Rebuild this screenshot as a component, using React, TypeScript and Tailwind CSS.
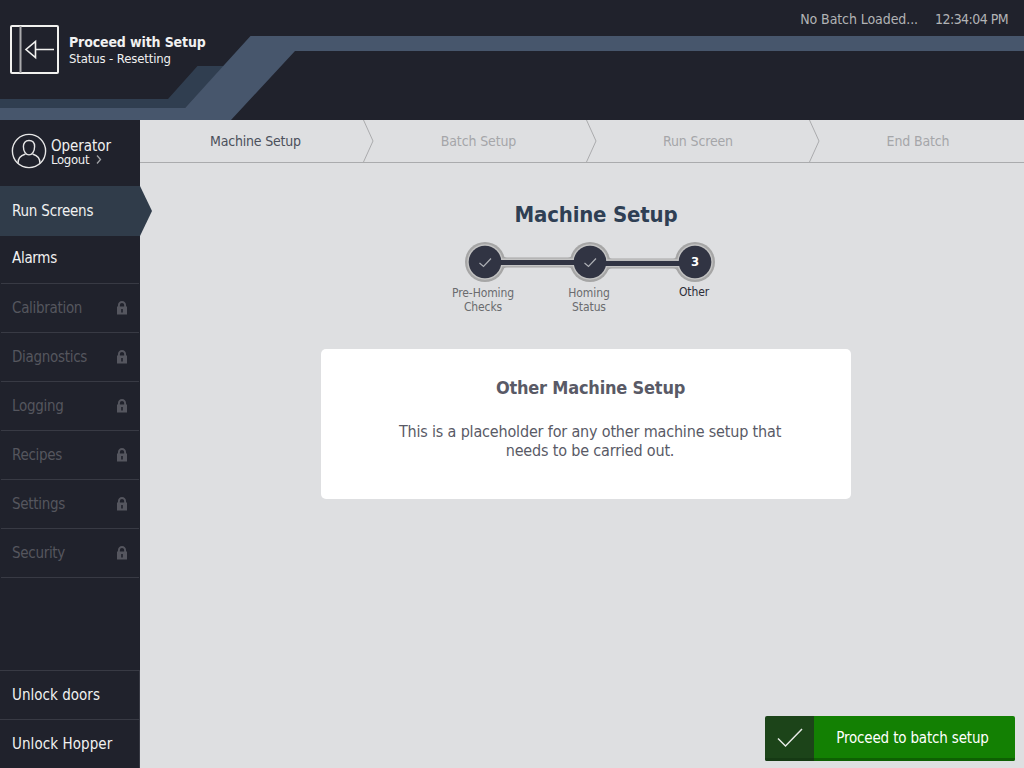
import React from "react";

const locked = ["Calibration", "Diagnostics", "Logging", "Recipes", "Settings", "Security"];

function Lock() {
  return (
    <svg width="10" height="14" viewBox="0 0 10 14" className="mr-[12px] shrink-0">
      <path d="M1.900 6.500V4.300a3.100 3.300 0 0 1 6.200 0v2.200" fill="none" stroke="#55565f" strokeWidth="1.900" />
      <path fillRule="evenodd" fill="#55565f" d="M0 5.500h10V13.500H0zM4.200 8v3.500h1.600V8z" />
    </svg>
  );
}

function Header() {
  return (
    <header className="relative h-[120px] shrink-0 bg-[#20222c]">
      <svg className="absolute inset-0" width="1024" height="120" viewBox="0 0 1024 120">
        <path d="M0 99H168L197.500 66H224L185 108H0Z" fill="#303e50" />
        <path d="M0 108H185L250.500 36H1024V51H295L231 120H0Z" fill="#47566c" />
      </svg>
      <div className="relative flex justify-between">
        <div className="flex pl-[10px] pt-[25px]">
          <svg width="49" height="49" viewBox="0 0 49 49" fill="none" stroke="#f1f1ef">
            <rect x="1" y="1" width="47" height="47" rx="1" strokeWidth="2" />
            <path d="M10.500 1V48" strokeWidth="2" stroke="#aaaaad" />
            <path d="M44 24.500H26M25.500 16.500V32.500L16 24.500Z" strokeWidth="1.600" />
          </svg>
          <div className="flex flex-col pl-[10px] pt-[8px] text-[#f1f1f1]">
            <span className="text-[14px] leading-[18px] font-bold tracking-[-0.13px]">Proceed with Setup</span>
            <span className="text-[13px] leading-[16px] tracking-[-0.13px]">Status - Resetting</span>
          </div>
        </div>
        <div className="flex gap-[17px] pr-[16px] pt-[10px] text-[14px] leading-[18px] text-[#b2b3b5]">
          <span className="tracking-[-0.08px]">No Batch Loaded...</span>
          <span className="tracking-[-0.55px]">12:34:04 PM</span>
        </div>
      </div>
    </header>
  );
}

function Sidebar() {
  return (
    <nav className="flex w-[140px] shrink-0 flex-col bg-[#20222c] text-[15px] leading-[18px] tracking-[-0.3px] text-[#f1f1f1]">
      <div className="flex h-[66px] shrink-0 pl-[11px] pt-[13px]">
        <svg width="36" height="36" viewBox="0 0 36 36" fill="none" stroke="#e6e6e6" strokeWidth="1.4">
          <circle cx="18" cy="18" r="16.600" />
          <path d="M18 7.500c-3.700 0-5.600 2.600-5.600 6 0 4.500 2.200 8.400 5.600 8.400s5.600-3.900 5.600-8.400c0-3.400-1.900-6-5.600-6Z" />
          <path d="M7 30.500c0-5.500 2-7.500 7.500-9.500M29 30.500c0-5.500-2-7.500-7.500-9.500" />
        </svg>
        <div className="flex flex-col pl-[4px] pt-[6px]">
          <span className="leading-[14px] tracking-[-0.05px]">Operator</span>
          <span className="flex items-center text-[13px] leading-[13px]">
            Logout
            <svg width="6" height="9" viewBox="0 0 6 9" className="ml-[7px]" fill="none" stroke="#a0a1a5" strokeWidth="1.300">
              <path d="M1 .5 4.500 4.500 1 8.500" />
            </svg>
          </span>
        </div>
      </div>
      <div className="relative flex h-[50px] shrink-0 items-center bg-[#303c4a] pl-[12px] tracking-[-0.2px]">
        Run Screens
        <svg className="absolute left-full top-0" width="12" height="50" viewBox="0 0 12 50">
          <path d="M0 0 12 25 0 50Z" fill="#303c4a" />
        </svg>
      </div>
      <div className="mx-px flex h-[48px] shrink-0 items-center border-b border-[#383a44] pb-[3px] pl-[11px]">Alarms</div>
      {locked.map((name) => (
        <div key={name} className="mx-px flex h-[49px] shrink-0 items-center justify-between border-b border-[#383a44] pl-[11px] text-[#55565e]">
          {name}
          <Lock />
        </div>
      ))}
      <div className="mt-auto flex h-[49px] shrink-0 items-center border-r border-t border-[#383a44] pl-[12px] tracking-[0.03px]">Unlock doors</div>
      <div className="flex h-[49px] shrink-0 items-center border-r border-t border-[#383a44] pl-[12px] tracking-[0.07px]">Unlock Hopper</div>
    </nav>
  );
}

function Chevron() {
  return (
    <svg width="11" height="42" viewBox="0 0 11 42" className="shrink-0" fill="none" stroke="#aaabad">
      <path d="M.5 0 10 21 .5 42" />
    </svg>
  );
}

function Breadcrumb() {
  return (
    <div className="flex h-[43px] shrink-0 items-center border-b border-[#aaabad] text-[14px] leading-[18px] text-[#a5a6a9]">
      <span className="w-[223px] pl-[8px] text-center tracking-[-0.2px] text-[#4b505b]">Machine Setup</span>
      <Chevron />
      <span className="w-[212px] pr-[3px] text-center tracking-[-0.13px]">Batch Setup</span>
      <Chevron />
      <span className="w-[212px] pr-[10px] text-center tracking-[-0.15px]">Run Screen</span>
      <Chevron />
      <span className="w-[204px] pr-[8px] text-center tracking-[-0.15px]">End Batch</span>
    </div>
  );
}

function Stepper() {
  return (
    <div className="flex w-[250px] flex-col">
      <div className="relative h-[40px]">
        <svg width="250" height="40" viewBox="0 0 250 40">
          <g fill="#a6a6a6">
            <circle cx="20" cy="20" r="20" />
            <circle cx="125" cy="20" r="20" />
            <circle cx="230" cy="20" r="20" />
            <path d="M35 10Q38 15.500 42 15.500H103Q107 15.500 110 10V30Q107 25.500 103 25.500H42Q38 25.500 35 30Z" />
            <path d="M140 10Q143 16.500 147 16.500H208Q212 16.500 215 10V31Q212 26.500 208 26.500H147Q143 26.500 140 31Z" />
          </g>
          <g fill="none" stroke="#c4c4c4" strokeWidth="1.500">
            <circle cx="20" cy="20" r="17" />
            <circle cx="125" cy="20" r="17" />
            <circle cx="230" cy="20" r="17" />
            <path d="M36 17.200H109M36 23.500H109M141 18H214M141 24.500H214" />
          </g>
          <g fill="#313443">
            <path d="M34 18H111V23H34ZM139 19H216V24H139Z" />
            <circle cx="20" cy="20" r="16.300" />
            <circle cx="125" cy="20" r="16.300" />
            <circle cx="230" cy="20" r="16.300" />
          </g>
          <path d="M14.500 21 18.500 24.500 26 16.500M119.500 21 123.500 24.500 131 16.500" fill="none" stroke="#adafb5" strokeWidth="1.200" />
        </svg>
        <span className="absolute right-0 top-0 w-[40px] text-center text-[13px] leading-[40px] font-bold text-white">3</span>
      </div>
      <div className="-mx-[22px] flex pt-[4px] text-center text-[12px] leading-[14px] tracking-[-0.1px] text-[#6a6b6e]">
        <span className="w-[80px]">Pre-Homing<br />Checks</span>
        <span className="ml-[26px] w-[80px]">Homing<br />Status</span>
        <span className="-mt-px ml-[25px] w-[80px] text-[#2b2d38]">Other</span>
      </div>
    </div>
  );
}

export default function App() {
  return (
    <div className="flex h-[768px] w-[1024px] flex-col overflow-hidden bg-[#dedfe1] [font-family:'DejaVu_Sans_Condensed','DejaVu_Sans',sans-serif] [font-stretch:condensed]">
      <Header />
      <div className="flex min-h-0 flex-1">
        <Sidebar />
        <main className="flex min-w-0 flex-1 flex-col">
          <Breadcrumb />
          <div className="flex flex-1 flex-col pl-[181px]">
            <h1 className="ml-[10px] mt-[38px] w-[530px] text-center text-[22px] leading-[28px] font-bold tracking-[-0.2px] text-[#2f3f54]">Machine Setup</h1>
            <div className="ml-[144px] mt-[13px]">
              <Stepper />
            </div>
            <section className="mt-[35px] h-[150px] w-[530px] rounded-[5px] bg-white pt-[27px] text-center text-[#595a66]">
              <h2 className="pl-[9px] text-[18px] leading-[23px] font-bold tracking-[-0.2px]">Other Machine Setup</h2>
              <p className="pl-[8px] pt-[23px] text-[16px] leading-[19px] tracking-[-0.17px]">
                This is a placeholder for any other machine setup that
                <br />
                needs to be carried out.
              </p>
            </section>
            <button className="mb-[7px] mr-[9px] mt-auto flex h-[45px] w-[250px] self-end overflow-hidden rounded-[2px] text-[15px] tracking-[-0.17px] text-white">
              <span className="flex h-full w-[49px] items-center justify-center border-b-[3px] border-[#163a14] bg-[#1c4419]">
                <svg width="26" height="20" viewBox="0 0 26 20" fill="none" stroke="#e6eae6" strokeWidth="1.500" className="relative top-px">
                  <path d="M1 10.500 8.500 18 25 1" />
                </svg>
              </span>
              <span className="flex h-full flex-1 items-center justify-center border-b-[3px] border-[#0e6003] bg-[#138003] pr-[4px] pt-[3px]">Proceed to batch setup</span>
            </button>
          </div>
        </main>
      </div>
    </div>
  );
}
